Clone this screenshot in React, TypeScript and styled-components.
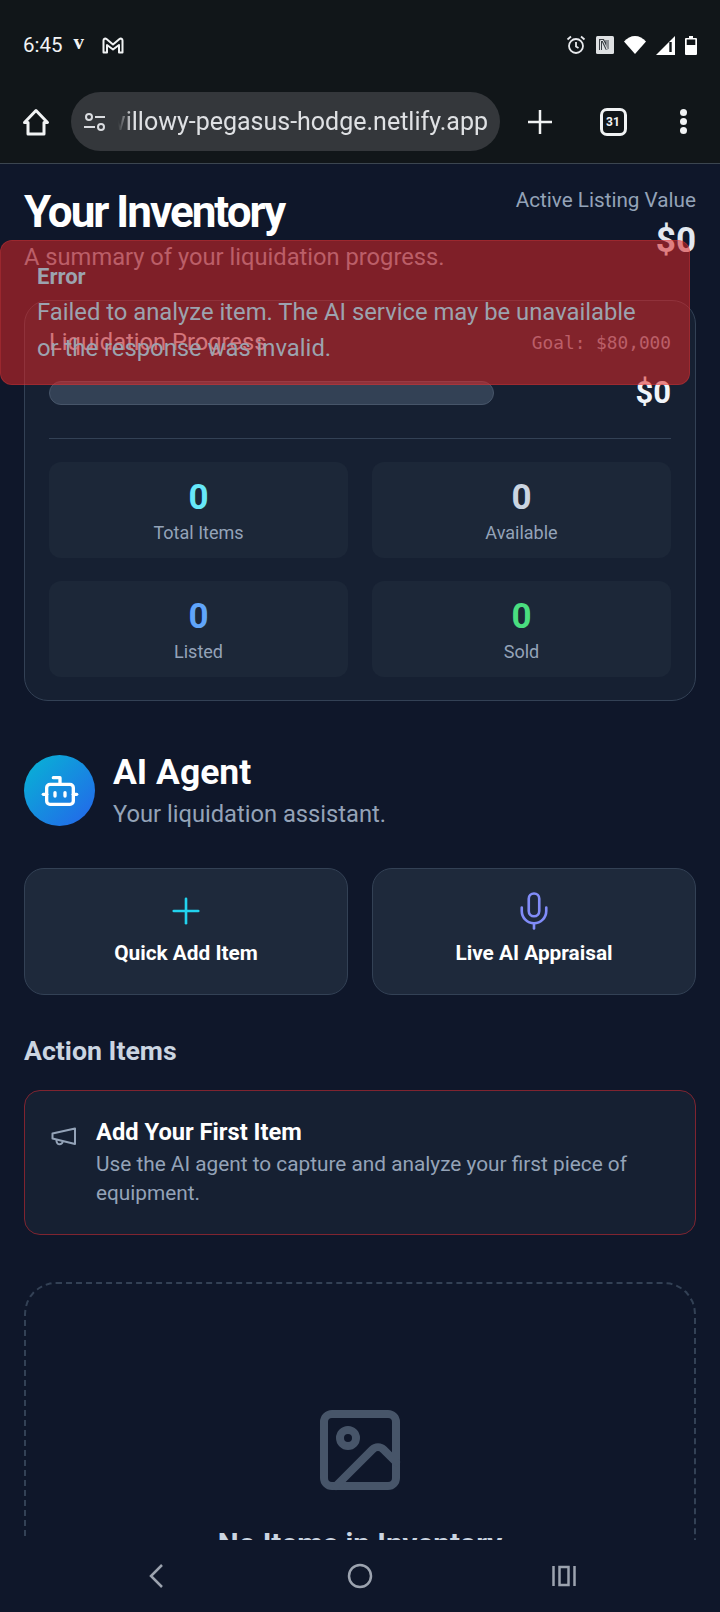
import { Bot, Image as ImageIcon, Mic, Plus } from "lucide-react";
import styled, { createGlobalStyle } from "styled-components";

const GlobalStyle = createGlobalStyle`
  * {
    box-sizing: border-box;
  }
  html,
  body {
    margin: 0;
    padding: 0;
    background: #0f172a;
    font-family: Roboto, "Liberation Sans", sans-serif;
  }
`;

const stats = [
  { label: "Total Items", color: "#67e8f9" },
  { label: "Available", color: "#cbd5e1" },
  { label: "Listed", color: "#60a5fa" },
  { label: "Sold", color: "#4ade80" },
];

function App() {
  return (
    <Screen>
      <GlobalStyle />
      <BrowserChrome>
        <StatusBar>
          <StatusLeft>
            <Clock>6:45</Clock>
            <Carrier>v</Carrier>
            <svg width="22" height="17" viewBox="0 0 22 17" fill="none" stroke="#f1f3f4" strokeWidth="2" strokeLinejoin="round">
              <path d="M1.500 15.500V3.500c0-1.700 1.800-2.400 3-1.400L11 7.500l6.500-5.400c1.200-1 3-.3 3 1.400v12H17V8L11 12.500 5 8v7.500z" />
            </svg>
          </StatusLeft>
          <StatusRight>
            <svg width="20" height="20" viewBox="0 0 20 20" fill="none" stroke="#e8eaed" strokeWidth="1.800">
              <circle cx="10" cy="11" r="7" />
              <path d="M10 7v4.500l2.500 1.500M1.500 4.500 5 1.500M18.500 4.500 15 1.500" />
            </svg>
            <svg width="18" height="18" viewBox="0 0 18 18">
              <rect width="18" height="18" rx="1.500" fill="#dfe1e3" />
              <path d="M4.500 14V4.500h2.500l4 8.500V4" fill="none" stroke="#3a3f44" strokeWidth="3" />
              <path d="M4.500 14V4.500h2.500l4 8.500V4" fill="none" stroke="#dfe1e3" strokeWidth="1" />
            </svg>
            <svg width="22" height="18" viewBox="0 0 22 18">
              <path d="M0 5.500C3 2 7 0 11 0s8 2 11 5.500L11 18z" fill="#fff" />
            </svg>
            <svg width="19" height="19" viewBox="0 0 19 19">
              <path fillRule="evenodd" d="M19 0v19H0zM13.300 6v10h2.400V6z" fill="#fff" />
            </svg>
            <svg width="12" height="19" viewBox="0 0 12 19">
              <path fillRule="evenodd" d="M4 0h4v2h3a1 1 0 0 1 1 1v15a1 1 0 0 1-1 1H1a1 1 0 0 1-1-1V3a1 1 0 0 1 1-1h3zM1.700 3.500V9h8.600V3.500z" fill="#fff" />
            </svg>
          </StatusRight>
        </StatusBar>
        <Toolbar>
          <svg width="28" height="28" viewBox="0 0 28 28" fill="none" stroke="#f1f3f4" strokeWidth="3" strokeLinejoin="round">
            <path d="M2.500 14.500 14 2.500l11.500 12H22V26H6V14.500z" />
          </svg>
          <UrlPill>
            <svg width="22" height="18" viewBox="0 0 22 18" fill="none" stroke="#dadce0" strokeWidth="2">
              <circle cx="5" cy="4" r="3" />
              <path d="M11 4h10M0 14h11" />
              <circle cx="17" cy="14" r="3" />
            </svg>
            <UrlClip>
              <UrlText>willowy-pegasus-hodge.netlify.app</UrlText>
            </UrlClip>
          </UrlPill>
          <ToolbarActions>
            <svg width="24" height="24" viewBox="0 0 24 24" fill="none" stroke="#f1f3f4" strokeWidth="2.500">
              <path d="M12 0v24M0 12h24" />
            </svg>
            <TabCount>31</TabCount>
            <MenuDots>
              <i />
              <i />
              <i />
            </MenuDots>
          </ToolbarActions>
        </Toolbar>
      </BrowserChrome>

      <Viewport>
        <PageHeader>
          <div>
            <PageTitle>Your Inventory</PageTitle>
            <PageSubtitle>A summary of your liquidation progress.</PageSubtitle>
          </div>
          <ListingValue>
            <ListingLabel>Active Listing Value</ListingLabel>
            <ListingAmount>$0</ListingAmount>
          </ListingValue>
        </PageHeader>

        <ProgressCard>
          <ProgressHead>
            <ProgressTitle>Liquidation Progress</ProgressTitle>
            <GoalText>Goal: $80,000</GoalText>
          </ProgressHead>
          <ProgressRow>
            <ProgressTrack />
            <ProgressAmount>$0</ProgressAmount>
          </ProgressRow>
          <Divider />
          <StatGrid>
            {stats.map((stat) => (
              <StatBox key={stat.label}>
                <StatValue $color={stat.color}>0</StatValue>
                <StatLabel>{stat.label}</StatLabel>
              </StatBox>
            ))}
          </StatGrid>
        </ProgressCard>

        <AgentHeader>
          <AgentAvatar>
            <Bot size={40} strokeWidth={2} color="#fff" />
          </AgentAvatar>
          <div>
            <AgentTitle>AI Agent</AgentTitle>
            <AgentSubtitle>Your liquidation assistant.</AgentSubtitle>
          </div>
        </AgentHeader>

        <ActionGrid>
          <ActionButton>
            <Plus size={42} strokeWidth={1.5} color="#22d3ee" />
            <span>Quick Add Item</span>
          </ActionButton>
          <ActionButton>
            <Mic size={42} strokeWidth={1.5} color="#818cf8" />
            <span>Live AI Appraisal</span>
          </ActionButton>
        </ActionGrid>

        <SectionTitle>Action Items</SectionTitle>
        <AlertCard>
          <AlertIcon>
            <svg width="26" height="20" viewBox="0 0 26 20" fill="none" stroke="#94a3b8" strokeWidth="2" strokeLinejoin="round">
              <path d="M24 1.500V17L1.500 11.500v-5z" />
              <path d="M5.500 13c-.3 3 1.500 4.500 3.500 4.300 1.500-.2 2.500-1.200 2.700-2.800" />
            </svg>
          </AlertIcon>
          <div>
            <AlertTitle>Add Your First Item</AlertTitle>
            <AlertText>Use the AI agent to capture and analyze your first piece of equipment.</AlertText>
          </div>
        </AlertCard>

        <EmptyState>
          <ImageIcon size={96} strokeWidth={2} color="#475569" />
          <EmptyTitle>No Items in Inventory</EmptyTitle>
        </EmptyState>
      </Viewport>

      <NavBar>
        <svg width="16" height="24" viewBox="0 0 16 24" fill="none" stroke="#9ca3af" strokeWidth="2.500">
          <path d="M14 1 3 12l11 11" />
        </svg>
        <svg width="26" height="26" viewBox="0 0 26 26" fill="none" stroke="#9ca3af" strokeWidth="2.500">
          <circle cx="13" cy="13" r="11" />
        </svg>
        <svg width="24" height="24" viewBox="0 0 24 24" fill="none" stroke="#9ca3af" strokeWidth="2.500">
          <path d="M1.500 2v20M22.500 2v20" />
          <rect x="7.500" y="3" width="9" height="18" />
        </svg>
      </NavBar>

      <ErrorToast>
        <ErrorTitle>Error</ErrorTitle>
        <ErrorText>Failed to analyze item. The AI service may be unavailable or the response was invalid.</ErrorText>
      </ErrorToast>
    </Screen>
  );
}
export default App;

const Screen = styled.div`
  position: relative;
  width: 720px;
  height: 1612px;
  display: flex;
  flex-direction: column;
  overflow: hidden;
  background: #0f172a;
`;
const BrowserChrome = styled.header`
  height: 164px;
  flex-shrink: 0;
  background: #111619;
  border-bottom: 1px solid #3c4650;
`;
const StatusBar = styled.div`
  height: 90px;
  padding: 0 23px;
  display: flex;
  justify-content: space-between;
  align-items: center;
`;
const StatusLeft = styled.div`
  display: flex;
  align-items: center;
`;
const Clock = styled.span`
  font-size: 20.500px;
  color: #f1f3f4;
`;
const Carrier = styled.span`
  margin: -6px 18px 0 11px;
  font-family: "Liberation Serif", serif;
  font-size: 21px;
  font-weight: 700;
  color: #f1f3f4;
`;
const StatusRight = styled.div`
  display: flex;
  align-items: center;
  gap: 10px;
`;
const Toolbar = styled.div`
  height: 73px;
  padding: 2px 0 12px 22px;
  display: flex;
  align-items: center;
`;
const UrlPill = styled.div`
  width: 429px;
  height: 59px;
  margin-left: 21px;
  padding: 0 12px 0 13px;
  display: flex;
  align-items: center;
  gap: 12px;
  border-radius: 30px;
  background: #34373b;
`;
const UrlClip = styled.div`
  flex: 1;
  min-width: 0;
  display: flex;
  justify-content: flex-end;
  overflow: hidden;
  -webkit-mask-image: linear-gradient(90deg, transparent 0, #000 14px);
  mask-image: linear-gradient(90deg, transparent 0, #000 14px);
`;
const UrlText = styled.span`
  flex-shrink: 0;
  font-size: 25px;
  color: #dfe1e4;
  white-space: nowrap;
`;
const ToolbarActions = styled.div`
  flex: 1;
  padding: 0 33px 0 28px;
  display: flex;
  align-items: center;
  justify-content: space-between;
`;
const TabCount = styled.div`
  width: 27px;
  height: 28px;
  margin-right: 6px;
  display: flex;
  align-items: center;
  justify-content: center;
  border: 3px solid #f1f3f4;
  border-radius: 7px;
  font-size: 12px;
  font-weight: 700;
  color: #f1f3f4;
`;
const MenuDots = styled.div`
  display: flex;
  flex-direction: column;
  gap: 2px;
  i {
    width: 7px;
    height: 7px;
    border-radius: 50%;
    background: #f1f3f4;
  }
`;
const Viewport = styled.main`
  flex: 1;
  min-height: 0;
  overflow: hidden;
  padding: 24px 24px 0;
`;
const PageHeader = styled.div`
  display: flex;
  justify-content: space-between;
  align-items: flex-start;
`;
const PageTitle = styled.h1`
  margin: 0;
  font-size: 44px;
  line-height: 48px;
  font-weight: 700;
  letter-spacing: -2px;
  color: #fff;
`;
const PageSubtitle = styled.p`
  margin: 7px 0 0;
  font-size: 23.700px;
  line-height: 28px;
  color: #94a3b8;
`;
const ListingValue = styled.div`
  text-align: right;
`;
const ListingLabel = styled.div`
  font-size: 20.700px;
  line-height: 25px;
  color: #94a3b8;
`;
const ListingAmount = styled.div`
  margin-top: 6px;
  font-size: 35px;
  line-height: 44px;
  font-weight: 700;
  color: #e2e8f0;
`;
const ProgressCard = styled.section`
  margin-top: 29px;
  padding: 24px 24px 23px;
  border: 1px solid #334155;
  border-radius: 24px;
  background: #162032;
`;
const ProgressHead = styled.div`
  display: flex;
  justify-content: space-between;
  align-items: center;
`;
const ProgressTitle = styled.div`
  font-size: 23.700px;
  line-height: 34px;
  color: #cbd5e1;
`;
const GoalText = styled.div`
  font-family: "DejaVu Sans Mono", monospace;
  font-size: 17.800px;
  color: #94a3b8;
`;
const ProgressRow = styled.div`
  margin-top: 16px;
  display: flex;
  justify-content: space-between;
  align-items: center;
`;
const ProgressTrack = styled.div`
  width: 445px;
  height: 24px;
  border: 1px solid #475569;
  border-radius: 12px;
  background: #334155;
`;
const ProgressAmount = styled.div`
  font-size: 31px;
  line-height: 36px;
  font-weight: 700;
  color: #f1f5f9;
`;
const Divider = styled.hr`
  margin: 27px 0 23px;
  height: 1px;
  border: 0;
  background: #334155;
`;
const StatGrid = styled.div`
  display: grid;
  grid-template-columns: 1fr 1fr;
  gap: 23px 24px;
`;
const StatBox = styled.div`
  height: 96px;
  padding-top: 16px;
  display: flex;
  flex-direction: column;
  align-items: center;
  border-radius: 12px;
  background: #1c2738;
`;
const StatValue = styled.div<{ $color: string }>`
  font-size: 35px;
  line-height: 40px;
  font-weight: 700;
  color: ${(p) => p.$color};
`;
const StatLabel = styled.div`
  margin-top: 3px;
  font-size: 18px;
  line-height: 24px;
  color: #94a3b8;
`;
const AgentHeader = styled.div`
  margin-top: 51px;
  display: flex;
  align-items: center;
  gap: 18px;
`;
const AgentAvatar = styled.div`
  width: 71px;
  height: 71px;
  display: flex;
  align-items: center;
  justify-content: center;
  border-radius: 50%;
  background: linear-gradient(135deg, #06b6d4, #2563eb);
`;
const AgentTitle = styled.h2`
  margin: 0;
  font-size: 35.500px;
  line-height: 40px;
  font-weight: 700;
  color: #fff;
`;
const AgentSubtitle = styled.p`
  margin: 7px 0 0;
  font-size: 23.700px;
  line-height: 30px;
  color: #94a3b8;
`;
const ActionGrid = styled.div`
  margin-top: 39px;
  display: grid;
  grid-template-columns: 1fr 1fr;
  gap: 24px;
`;
const ActionButton = styled.div`
  height: 127px;
  padding-top: 21px;
  display: flex;
  flex-direction: column;
  align-items: center;
  gap: 9px;
  border: 1px solid #334155;
  border-radius: 20px;
  background: #1e293b;
  font-size: 20.800px;
  font-weight: 700;
  color: #fff;
`;
const SectionTitle = styled.h3`
  margin: 40px 0 0;
  font-size: 26.700px;
  line-height: 32px;
  font-weight: 700;
  color: #cbd5e1;
`;
const AlertCard = styled.div`
  margin-top: 23px;
  padding: 26px 26px 0;
  height: 145px;
  display: flex;
  border: 1px solid #7f2430;
  border-radius: 16px;
  background: #162032;
`;
const AlertIcon = styled.div`
  width: 45px;
  padding-top: 10px;
  flex-shrink: 0;
`;
const AlertTitle = styled.div`
  font-size: 23.700px;
  line-height: 30px;
  font-weight: 700;
  color: #fff;
`;
const AlertText = styled.div`
  margin-top: 3px;
  font-size: 20.800px;
  line-height: 29px;
  color: #94a3b8;
`;
const EmptyState = styled.div`
  margin-top: 47px;
  height: 400px;
  padding-top: 118px;
  display: flex;
  flex-direction: column;
  align-items: center;
  border: 2px dashed #334155;
  border-radius: 32px;
`;
const EmptyTitle = styled.div`
  margin-top: 28px;
  font-size: 29.600px;
  line-height: 36px;
  font-weight: 700;
  color: #cbd5e1;
`;
const NavBar = styled.nav`
  height: 72px;
  flex-shrink: 0;
  display: grid;
  grid-template-columns: repeat(3, 204px);
  justify-content: center;
  justify-items: center;
  align-items: center;
  background: #0f172a;
`;
const ErrorToast = styled.div`
  position: absolute;
  top: 240px;
  left: 0;
  width: 690px;
  height: 145px;
  padding: 18px 36px;
  border: 1px solid rgba(239, 68, 68, 0.25);
  border-radius: 12px;
  background: rgba(220, 38, 38, 0.55);
`;
const ErrorTitle = styled.div`
  font-size: 22px;
  line-height: 36px;
  font-weight: 700;
  color: #9ca3af;
`;
const ErrorText = styled.div`
  margin-top: -1px;
  font-size: 23.800px;
  line-height: 36px;
  color: #9ca3af;
`;
